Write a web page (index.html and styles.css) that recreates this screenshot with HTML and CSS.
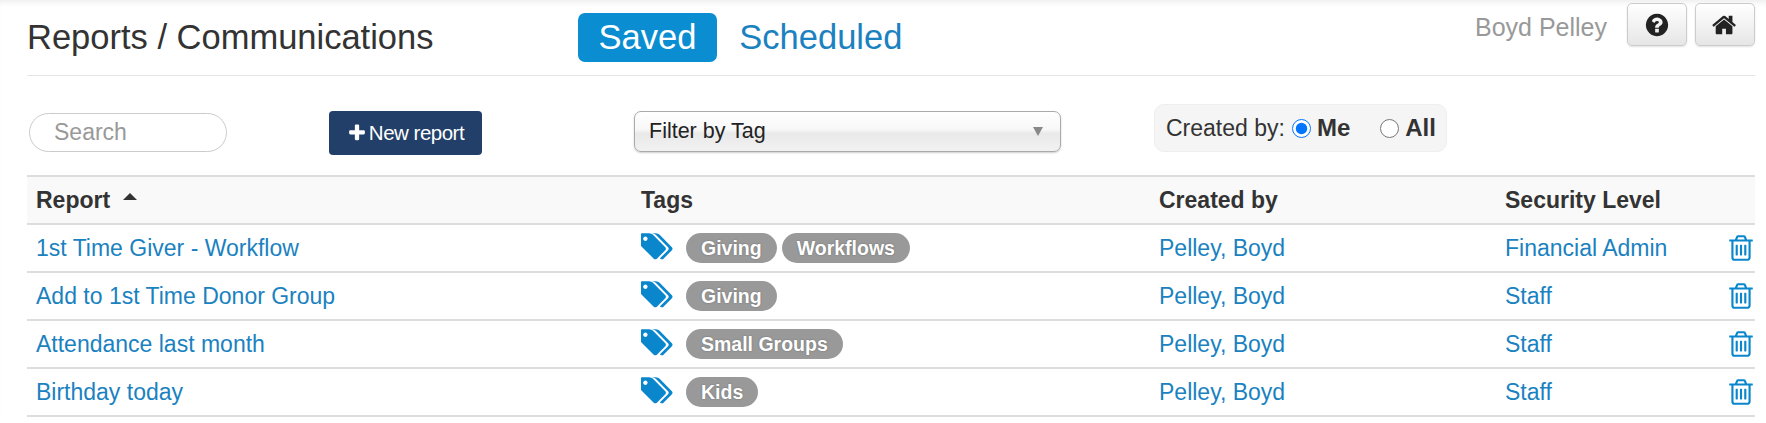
FILE: index.html
```html
<!DOCTYPE html>
<html>
<head>
	<title>Reports / Communications</title>
	<link rel="stylesheet" href="styles.css">
</head>
<body>
	<svg class="icon-defs" width="0" height="0">
		<symbol id="i-tags" viewBox="0 0 1920 1792"><path d="M384 448q0-53-37.5-90.5t-90.5-37.5-90.5 37.5-37.5 90.5 37.5 90.5 90.5 37.5 90.5-37.5 37.5-90.5zm1067 576q0 53-37 90l-491 492q-39 37-91 37-53 0-90-37l-715-716q-38-37-64.5-101t-26.5-117v-416q0-52 38-90t90-38h416q53 0 117 26.5t102 64.5l715 714q37 39 37 91zm384 0q0 53-37 90l-491 492q-39 37-91 37-36 0-59-14t-53-45l470-470q37-37 37-90 0-52-37-91l-715-714q-38-38-102-64.5t-117-26.5h224q53 0 117 26.5t102 64.5l715 714q37 39 37 91z"/></symbol>
		<symbol id="i-trash" viewBox="0 0 1792 1792"><path d="M704 736v576q0 14-9 23t-23 9h-64q-14 0-23-9t-9-23v-576q0-14 9-23t23-9h64q14 0 23 9t9 23zm256 0v576q0 14-9 23t-23 9h-64q-14 0-23-9t-9-23v-576q0-14 9-23t23-9h64q14 0 23 9t9 23zm256 0v576q0 14-9 23t-23 9h-64q-14 0-23-9t-9-23v-576q0-14 9-23t23-9h64q14 0 23 9t9 23zm128 724v-948h-896v948q0 22 7 40.5t14.5 27 10.5 8.5h832q3 0 10.5-8.5t14.5-27 7-40.5zm-672-1076h448l-48-117q-7-9-17-11h-317q-10 2-17 11zm928 32v64q0 14-9 23t-23 9h-96v948q0 83-47 143.5t-113 60.5h-832q-66 0-113-58.5t-47-141.5v-952h-96q-14 0-23-9t-9-23v-64q0-14 9-23t23-9h309l70-167q15-37 54-63t79-26h320q40 0 79 26t54 63l70 167h309q14 0 23 9t9 23z"/></symbol>
	</svg>

	<div class="container">
		<div class="top-bar">
			<h1 class="page-title">Reports / Communications</h1>
			<div class="tabs">
				<a class="tab active">Saved</a>
				<a class="tab">Scheduled</a>
			</div>
			<div class="user-box">
				<span class="user-name">Boyd Pelley</span>
				<button class="icon-btn">
					<svg viewBox="0 0 1792 1792"><path d="M1024 1376v-192q0-14-9-23t-23-9h-192q-14 0-23 9t-9 23v192q0 14 9 23t23 9h192q14 0 23-9t9-23zm256-672q0-88-55.5-163t-138.5-116-170-41q-243 0-371 213-15 24 8 42l132 100q7 6 19 6 16 0 25-12 53-68 86-92 34-24 86-24 48 0 85.5 26t37.5 59q0 38-20 61t-68 45q-63 28-115.5 86.5t-52.5 125.5v36q0 14 9 23t23 9h192q14 0 23-9t9-23q0-19 21.5-49.5t54.5-49.5q32-18 49-28.5t46-35 44.5-48 28-60.5 12.5-81zm384 192q0 209-103 385.5t-279.5 279.5-385.5 103-385.5-103-279.5-279.5-103-385.5 103-385.5 279.5-279.5 385.5-103 385.5 103 279.5 279.5 103 385.5z"/></svg>
				</button>
				<button class="icon-btn">
					<svg viewBox="0 0 1792 1792"><path d="M1408 992v480q0 26-19 45t-45 19h-384v-384h-256v384h-384q-26 0-45-19t-19-45v-480q0-1 .5-3t.5-3l575-474 575 474q1 2 1 6zm223-69l-62 74q-8 9-21 11h-3q-13 0-21-7l-692-577-692 577q-12 8-24 7-13-2-21-11l-62-74q-8-10-7-23.5t11-21.5l719-599q32-26 76-26t76 26l244 204v-195q0-14 9-23t23-9h192q14 0 23 9t9 23v408l219 182q10 8 11 21.5t-7 23.5z"/></svg>
				</button>
			</div>
		</div>

		<div class="filters">
			<input class="search" type="text" placeholder="Search">
			<button class="new-report">
				<svg viewBox="0 0 1792 1792"><path d="M1600 736v192q0 40-28 68t-68 28h-416v416q0 40-28 68t-68 28h-192q-40 0-68-28t-28-68v-416h-416q-40 0-68-28t-28-68v-192q0-40 28-68t68-28h416v-416q0-40 28-68t68-28h192q40 0 68 28t28 68v416h416q40 0 68 28t28 68z"/></svg>
				New report
			</button>
			<div class="tag-filter">
				<span>Filter by Tag</span>
				<span class="arrow"></span>
			</div>
			<div class="created-by">
				<span>Created by:</span>
				<label class="radio"><input type="radio" name="who" checked><b>Me</b></label>
				<label class="radio radio-all"><input type="radio" name="who"><b>All</b></label>
			</div>
		</div>

		<table class="reports">
			<thead>
				<tr>
					<th class="col-report">Report <span class="sort-up"></span></th>
					<th class="col-tags">Tags</th>
					<th class="col-owner">Created by</th>
					<th class="col-level">Security Level</th>
					<th class="col-del"></th>
				</tr>
			</thead>
			<tbody>
				<tr>
					<td><a>1st Time Giver - Workflow</a></td>
					<td><div class="tag-list"><svg class="tag-icon"><use href="#i-tags"/></svg><span class="tag">Giving</span><span class="tag">Workflows</span></div></td>
					<td><a>Pelley, Boyd</a></td>
					<td><a>Financial Admin</a></td>
					<td><svg class="trash"><use href="#i-trash"/></svg></td>
				</tr>
				<tr>
					<td><a>Add to 1st Time Donor Group</a></td>
					<td><div class="tag-list"><svg class="tag-icon"><use href="#i-tags"/></svg><span class="tag">Giving</span></div></td>
					<td><a>Pelley, Boyd</a></td>
					<td><a>Staff</a></td>
					<td><svg class="trash"><use href="#i-trash"/></svg></td>
				</tr>
				<tr>
					<td><a>Attendance last month</a></td>
					<td><div class="tag-list"><svg class="tag-icon"><use href="#i-tags"/></svg><span class="tag">Small Groups</span></div></td>
					<td><a>Pelley, Boyd</a></td>
					<td><a>Staff</a></td>
					<td><svg class="trash"><use href="#i-trash"/></svg></td>
				</tr>
				<tr>
					<td><a>Birthday today</a></td>
					<td><div class="tag-list"><svg class="tag-icon"><use href="#i-tags"/></svg><span class="tag">Kids</span></div></td>
					<td><a>Pelley, Boyd</a></td>
					<td><a>Staff</a></td>
					<td><svg class="trash"><use href="#i-trash"/></svg></td>
				</tr>
			</tbody>
		</table>
	</div>
</body>
</html>
```

FILE: styles.css
```css
body {
	margin: 0;
	font-family: "Liberation Sans", Arial, sans-serif;
	color: #333;
	background-color: #fff;
	box-shadow: inset 0 6px 6px -4px rgba(0,0,0,0.08);
}
.icon-defs {
	display: block;
	height: 0;
}
.container {
	padding: 0 11px 0 27px;
}

/* header */
.top-bar {
	display: flex;
	height: 75px;
	border-bottom: 1px solid #e5e5e5;
}
.page-title {
	width: 551px;
	margin: 0;
	padding-top: 17px;
	font-size: 34.5px;
	line-height: 40px;
	font-weight: normal;
}
.tabs {
	display: flex;
	align-items: flex-start;
	padding-top: 13px;
}
.tab {
	height: 49px;
	padding: 0 20.5px;
	margin-right: 2px;
	font-size: 34.5px;
	line-height: 48px;
	color: #1a82c0;
	border-radius: 7px;
}
.tab.active {
	color: #fff;
	background-color: #0a8dd1;
}
.user-box {
	display: flex;
	align-items: flex-start;
	margin-left: auto;
	padding-top: 3px;
}
.user-name {
	margin-right: 20px;
	font-size: 25px;
	line-height: 48px;
	color: #999;
}
.icon-btn {
	width: 60px;
	height: 43px;
	margin-right: 8px;
	padding: 0;
	border: 1px solid #ccc;
	border-radius: 5px;
	background: linear-gradient(#fff, #e6e6e6);
	box-shadow: 0 1px 2px rgba(0,0,0,0.12);
}
.icon-btn:last-child {
	margin-right: 0;
}
.icon-btn svg {
	width: 26px;
	height: 26px;
	fill: #222;
	vertical-align: middle;
}

/* filters */
.filters {
	display: flex;
	align-items: flex-start;
	height: 99px;
}
.search {
	box-sizing: border-box;
	width: 198px;
	height: 39px;
	margin: 37px 0 0 2px;
	padding: 0 24px;
	font-family: inherit;
	font-size: 23px;
	border: 1px solid #ccc;
	border-radius: 20px;
}
.search::placeholder {
	color: #999;
}
.new-report {
	display: flex;
	align-items: center;
	justify-content: center;
	width: 153px;
	height: 44px;
	margin: 35px 0 0 102px;
	padding: 0;
	font-family: inherit;
	font-size: 20.5px;
	letter-spacing: -0.5px;
	color: #fff;
	background-color: #213f68;
	border: none;
	border-radius: 4px;
}
.new-report svg {
	width: 20px;
	height: 20px;
	margin-right: 2px;
	fill: #fff;
}
.tag-filter {
	box-sizing: border-box;
	display: flex;
	align-items: center;
	justify-content: space-between;
	width: 427px;
	height: 41px;
	margin: 35px 0 0 152px;
	padding: 0 17px 0 14px;
	font-size: 21.5px;
	color: #222;
	border: 1px solid #aaa;
	border-radius: 7px;
	background: linear-gradient(#fff 0%, #f7f7f7 45%, #e9e9e9 55%, #f2f2f2 100%);
	box-shadow: 0 1px 2px rgba(0,0,0,0.2);
}
.arrow {
	width: 0;
	height: 0;
	border-left: 5px solid transparent;
	border-right: 5px solid transparent;
	border-top: 9px solid #888;
}
.created-by {
	box-sizing: border-box;
	display: flex;
	align-items: center;
	width: 293px;
	height: 48px;
	margin: 28px 0 0 93px;
	padding: 0 0 0 11px;
	font-size: 23px;
	white-space: nowrap;
	background-color: #f5f5f5;
	border: 1px solid #eee;
	border-radius: 10px;
}
.radio {
	display: flex;
	align-items: center;
	margin-left: 7px;
	font-size: 24px;
}
.radio input {
	width: 19px;
	height: 19px;
	margin: 0 6px 0 0;
}
.radio-all {
	margin-left: 30px;
}

/* table */
.reports {
	width: 100%;
	table-layout: fixed;
	border-collapse: collapse;
	font-size: 23px;
	border-top: 2px solid #ddd;
}
.reports th {
	height: 46px;
	padding: 0 9px;
	text-align: left;
	font-size: 23px;
	background-color: #f9f9f9;
	border-bottom: 2px solid #ddd;
}
.reports td {
	height: 48px;
	padding: 0 9px;
	box-sizing: border-box;
	border-bottom: 2px solid #ddd;
}
.reports a {
	color: #1a82c0;
}
.col-report {
	width: 587px;
}
.col-tags {
	width: 500px;
}
.col-owner {
	width: 328px;
}
.col-del {
	width: 12px;
}
.sort-up {
	display: inline-block;
	width: 0;
	height: 0;
	margin: 0 0 8px 6px;
	border-left: 7px solid transparent;
	border-right: 7px solid transparent;
	border-bottom: 7px solid #333;
}
.tag-list {
	display: flex;
	align-items: center;
}
.tag-icon {
	width: 33px;
	height: 31px;
	margin: 0 12px 3px 0;
	fill: #0a86cd;
}
.tag {
	margin-right: 5px;
	padding: 0 15px;
	font-size: 19.5px;
	line-height: 30px;
	font-weight: bold;
	color: #fff;
	background-color: #999;
	border-radius: 15px;
	text-shadow: 0 0 2px rgba(0,0,0,0.3);
}
.trash {
	display: block;
	width: 30px;
	height: 30px;
	margin-left: -8px;
	fill: #0a86cd;
}
```
